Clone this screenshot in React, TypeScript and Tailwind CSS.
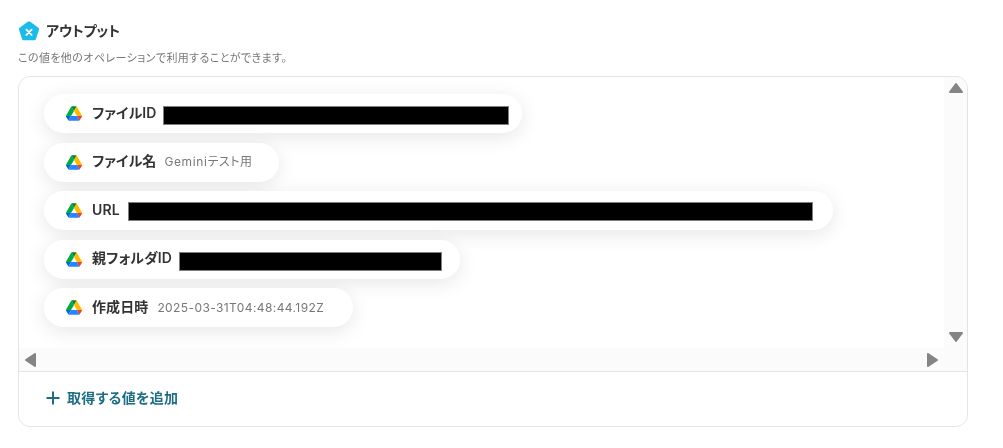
const FONT = "font-['Inter','Noto_Sans_CJK_JP','Noto_Sans',sans-serif]"

function DriveIcon() {
  return (
    <svg viewBox="0 0 87.3 78" className="w-4 h-[15px] shrink-0">
      <path d="m6.6 66.85 3.85 6.65c.8 1.4 1.95 2.5 3.3 3.3l13.75-23.8h-27.5c0 1.55.4 3.1 1.2 4.5z" fill="#0066da" />
      <path d="m43.65 25-13.75-23.8c-1.35.8-2.5 1.9-3.3 3.3l-25.4 44a9.06 9.06 0 0 0 -1.2 4.5h27.5z" fill="#00ac47" />
      <path d="m73.55 76.8c1.35-.8 2.5-1.9 3.3-3.3l1.6-2.75 7.65-13.25c.8-1.4 1.2-2.95 1.2-4.5h-27.502l5.852 11.5z" fill="#ea4335" />
      <path d="m43.65 25 13.75-23.8c-1.35-.8-2.9-1.2-4.5-1.2h-18.5c-1.6 0-3.15.45-4.5 1.2z" fill="#00832d" />
      <path d="m59.8 53h-32.3l-13.75 23.8c1.35.8 2.9 1.2 4.5 1.2h50.8c1.6 0 3.15-.45 4.5-1.2z" fill="#2684fc" />
      <path d="m73.4 26.5-12.7-22c-.8-1.4-1.95-2.5-3.3-3.3l-13.75 23.8 16.15 28h27.45c0-1.55-.4-3.1-1.2-4.5z" fill="#ffba00" />
    </svg>
  )
}

function Pill({ label, children, width }: { label: string; children: React.ReactNode; width: string }) {
  return (
    <div className={`${width} h-[39px] flex items-center pl-[22px] rounded-full bg-white shadow-[0_4px_20px_rgba(0,0,0,0.1)]`}>
      <DriveIcon />
      <span className="ml-[10px] mr-2 mb-[2px] text-sm font-semibold tracking-[0.1px] text-[#333] whitespace-nowrap">{label}</span>
      {children}
    </div>
  )
}

// black block hiding an id in the capture, with the grey edge it has there
function Redacted({ className }: { className: string }) {
  return <div className={`${className} h-[19px] bg-black border border-[#808080] shrink-0`} />
}

function Arrow({ points }: { points: string }) {
  return (
    <svg viewBox="0 0 14 14" className="w-[14px] h-[14px]">
      <polygon points={points} fill="#858585" stroke="#858585" strokeWidth="2" strokeLinejoin="round" />
    </svg>
  )
}

export default function App() {
  return (
    <div className={`w-[1003px] h-[448px] pl-[18px] pr-[35px] pt-[20px] overflow-hidden tracking-[0.4px] will-change-transform [font-feature-settings:'palt'] ${FONT}`}>
      {/* Heading */}
      <div className="flex items-center h-[22px] pl-[1px]">
        <svg viewBox="0.8 0.6 18.4 17.6" className="w-5 h-5 shrink-0">
          <path d="M8.8 1 1.4 6.3c-.6.4-.8 1.1-.6 1.8l2.8 8.7c.2.7.8 1.2 1.6 1.2h9.6c.8 0 1.4-.5 1.6-1.2l2.8-8.7c.2-.7 0-1.4-.6-1.8L11.2 1c-.7-.5-1.7-.5-2.4 0z" fill="#1bbcea" />
          <path d="m7.6 8.2 4.8 4.8m0-4.8-4.8 4.8" stroke="#fff" strokeWidth="1.7" strokeLinecap="round" />
        </svg>
        <span className="ml-[7px] text-sm font-semibold tracking-[-0.1px] text-[#333]">アウトプット</span>
      </div>
      <p className="mt-[7px] h-[18px] text-[11px] leading-[18px] text-[#777]">この値を他のオペレーションで利用することができます。</p>

      {/* Output card */}
      <div className="mt-[9px] h-[351px] rounded-xl border border-[#e2e4e6] overflow-hidden flex flex-col">
        <div className="h-[294px] flex flex-col">
          <div className="flex-1 flex">
            <div className="flex-1 pl-[25px] pt-[17px] flex flex-col gap-[9.5px]">
              <Pill label="ファイルID" width="w-[478px]">
                <Redacted className="w-[346px] -ml-[2px] mt-[3px]" />
              </Pill>
              <Pill label="ファイル名" width="w-[235px]">
                <span className="text-xs tracking-[0.6px] text-[#777] whitespace-nowrap">Geminiテスト用</span>
              </Pill>
              <Pill label="URL" width="w-[789px]">
                <Redacted className="w-[685px] mt-[1px]" />
              </Pill>
              <Pill label="親フォルダID" width="w-[416px]">
                <Redacted className="w-[263px] -ml-[1px] mt-[5px]" />
              </Pill>
              <Pill label="作成日時" width="w-[309px]">
                <span className="ml-[1px] text-xs text-[#777] whitespace-nowrap">2025-03-31T04:48:44.192Z</span>
              </Pill>
            </div>
            {/* Vertical scrollbar */}
            <div className="w-[23px] bg-[#fbfbfb] flex flex-col items-center justify-between py-[4px]">
              <Arrow points="7,3 13,11 1,11" />
              <Arrow points="1,3 13,3 7,11" />
            </div>
          </div>
          {/* Horizontal scrollbar */}
          <div className="h-[23px] pl-[5px] pr-[28px] bg-[#fbfbfb] flex items-center justify-between">
            <Arrow points="11,1 11,13 2,7" />
            <Arrow points="3,1 3,13 12,7" />
          </div>
        </div>

        {/* Footer */}
        <div className="flex-1 border-t border-[#e2e4e6] flex items-center pl-[27px] pb-[2px]">
          <svg viewBox="0 0 14 14" className="w-[14px] h-[14px]">
            <path d="M7 .5v13M.5 7h13" stroke="#1d6d85" strokeWidth="2" />
          </svg>
          <span className="ml-[7px] text-sm font-semibold tracking-[0.3px] text-[#1d6d85]">取得する値を追加</span>
        </div>
      </div>
    </div>
  )
}
